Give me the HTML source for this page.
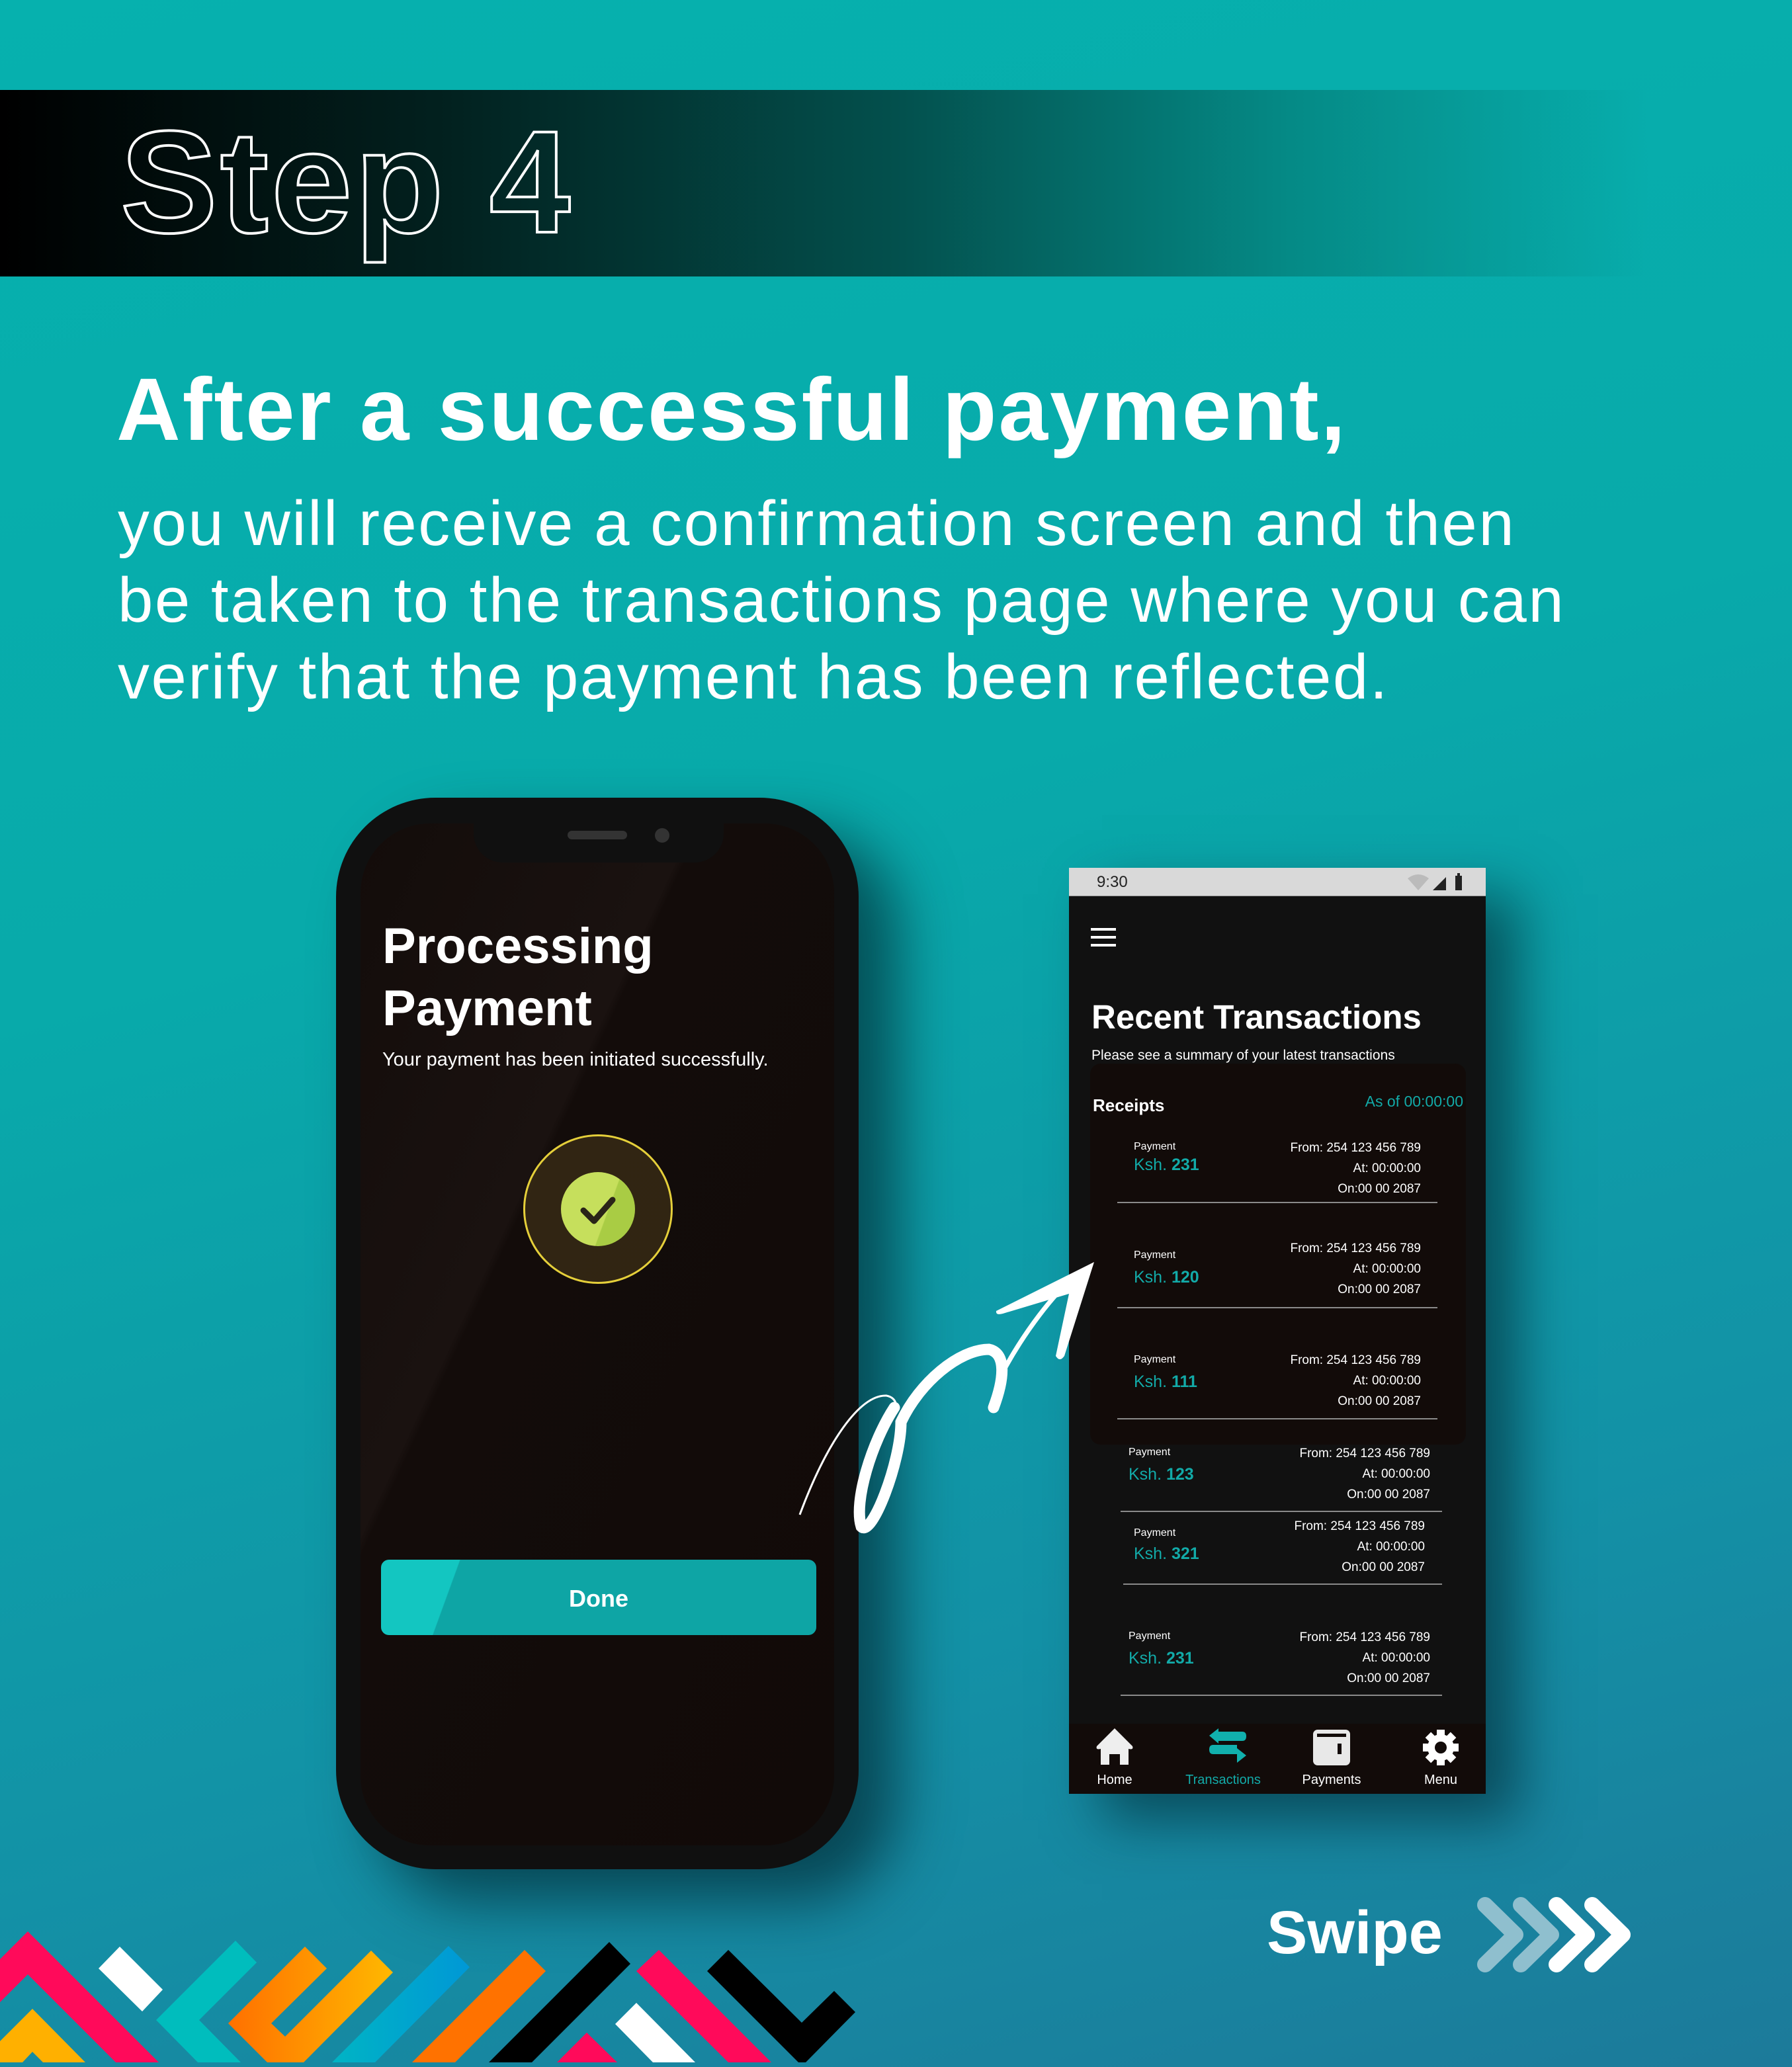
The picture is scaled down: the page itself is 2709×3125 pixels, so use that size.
<!DOCTYPE html>
<html><head><meta charset="utf-8">
<style>
*{margin:0;padding:0;box-sizing:border-box}
html,body{width:2709px;height:3125px;overflow:hidden}
body{position:relative;font-family:"Liberation Sans",sans-serif;background:linear-gradient(165deg,#06b1ae 0%,#08aaaa 40%,#1391a6 75%,#1c7a9a 100%);}
.a{position:absolute;white-space:nowrap;line-height:1}
.band{position:absolute;left:0;top:136px;width:2709px;height:282px;background:linear-gradient(90deg,#000 0%,#02211f 25%,#03504d 50%,#058a86 72%,rgba(6,170,168,0) 92%)}
.w{color:#fff}
.t{color:#12aaa8}
.phone{position:absolute;left:508px;top:1206px;width:790px;height:1620px;border-radius:150px;background:#101010;box-shadow:60px 50px 90px rgba(0,35,45,.65)}
.screen{position:absolute;left:37px;top:39px;width:716px;height:1545px;border-radius:105px;background:linear-gradient(115deg,#130c0a 0%,#1a1210 35%,#130c0a 36%,#110a08 100%);overflow:hidden}
.notch{position:absolute;left:208px;top:38px;width:378px;height:60px;background:#101010;border-radius:0 0 44px 44px}
.rp{position:absolute;left:1616px;top:1312px;width:630px;height:1400px;background:#111;box-shadow:50px 40px 80px rgba(0,35,45,.6);overflow:hidden}
.r{text-align:right}
.div{position:absolute;height:2px;background:#8a8a8a}
.p{font-size:96px;letter-spacing:2.5px}
</style></head><body>
<div class="band"></div>
<div class="a" style="left:182px;top:165px;font-size:220px;font-weight:bold;color:transparent;-webkit-text-stroke:4px #fff;letter-spacing:4px">Step 4</div>
<div class="a w" style="left:176px;top:553px;font-size:134px;font-weight:bold;letter-spacing:3px">After a successful payment,</div>
<div class="a w p" style="left:178px;top:744px">you will receive a confirmation screen and then</div>
<div class="a w p" style="left:178px;top:860px">be taken to the transactions page where you can</div>
<div class="a w p" style="left:178px;top:976px">verify that the payment has been reflected.</div>

<div class="phone">
 <div class="screen">
  <div class="a w" style="left:33px;top:148px;font-size:76px;font-weight:bold">Processing</div>
  <div class="a w" style="left:33px;top:242px;font-size:76px;font-weight:bold">Payment</div>
  <div class="a w" style="left:33px;top:343px;font-size:29px">Your payment has been initiated successfully.</div>
  <div style="position:absolute;left:246px;top:470px;width:226px;height:226px;border-radius:50%;border:3px solid #e5cf3a;background:rgba(70,55,25,.6)"></div>
  <div style="position:absolute;left:303px;top:527px;width:112px;height:112px;border-radius:50%;background:linear-gradient(110deg,#c6df5c 60%,#a9cc44 61%)"></div>
  <svg style="position:absolute;left:303px;top:527px" width="112" height="112"><path d="M34 58 L50 74 L78 42" fill="none" stroke="#2a2418" stroke-width="9" stroke-linecap="round" stroke-linejoin="round"/></svg>
  <div style="position:absolute;left:31px;top:1113px;width:658px;height:114px;border-radius:12px;background:linear-gradient(110deg,#13c6c1 17%,#0ea5a5 17.2%)"></div>
  <div class="a w" style="left:31px;top:1154px;width:658px;text-align:center;font-size:36px;font-weight:bold">Done</div>
 </div>
 <div class="notch"></div>
 <div style="position:absolute;left:350px;top:50px;width:90px;height:13px;border-radius:7px;background:#333"></div>
 <div style="position:absolute;left:482px;top:46px;width:22px;height:22px;border-radius:50%;background:#333"></div>
</div>

<div class="rp">
 <div style="position:absolute;left:0;top:0;width:630px;height:43px;background:#d9d9d9;border-bottom:1px solid #999"></div>
 <div class="a" style="left:42px;top:10px;font-size:24px;color:#222">9:30</div>
 <svg style="position:absolute;left:508px;top:6px" width="90" height="32"><path d="M4 10 Q20 -2 36 10 L20 28Z" fill="#bbb"/><path d="M42 28 L62 8 L62 28Z" fill="#222"/><rect x="76" y="6" width="10" height="22" fill="#222"/><rect x="79" y="2" width="4" height="4" fill="#222"/></svg>
 <div style="position:absolute;left:33px;top:91px;width:38px;height:4px;background:#fff"></div>
 <div style="position:absolute;left:33px;top:103px;width:38px;height:4px;background:#fff"></div>
 <div style="position:absolute;left:33px;top:115px;width:38px;height:4px;background:#fff"></div>
 <div class="a w" style="left:34px;top:200px;font-size:51px;font-weight:bold">Recent Transactions</div>
 <div class="a w" style="left:34px;top:273px;font-size:21px">Please see a summary of your latest transactions</div>
 <div style="position:absolute;left:32px;top:296px;width:568px;height:576px;border-radius:16px;background:#120b09"></div>
 <div class="a w" style="left:36px;top:346px;font-size:26px;font-weight:bold">Receipts</div>
 <div class="a t r" style="right:34px;top:342px;font-size:23px">As of 00:00:00</div>
 <div class="a w" style="left:98px;top:414px;font-size:16px">Payment</div>
 <div class="a t" style="left:98px;top:437px;font-size:25px">Ksh. <b>231</b></div>
 <div class="a w r" style="right:98px;top:408px;font-size:19px;line-height:31px">From: 254 123 456 789<br>At: 00:00:00<br>On:00 00 2087</div>
 <div class="div" style="left:73px;top:505px;width:484px"></div>

 <div class="a w" style="left:98px;top:578px;font-size:16px">Payment</div>
 <div class="a t" style="left:98px;top:607px;font-size:25px">Ksh. <b>120</b></div>
 <div class="a w r" style="right:98px;top:560px;font-size:19px;line-height:31px">From: 254 123 456 789<br>At: 00:00:00<br>On:00 00 2087</div>
 <div class="div" style="left:73px;top:664px;width:484px"></div>

 <div class="a w" style="left:98px;top:736px;font-size:16px">Payment</div>
 <div class="a t" style="left:98px;top:765px;font-size:25px">Ksh. <b>111</b></div>
 <div class="a w r" style="right:98px;top:729px;font-size:19px;line-height:31px">From: 254 123 456 789<br>At: 00:00:00<br>On:00 00 2087</div>
 <div class="div" style="left:73px;top:832px;width:484px"></div>

 <div class="a w" style="left:90px;top:876px;font-size:16px">Payment</div>
 <div class="a t" style="left:90px;top:905px;font-size:25px">Ksh. <b>123</b></div>
 <div class="a w r" style="right:84px;top:870px;font-size:19px;line-height:31px">From: 254 123 456 789<br>At: 00:00:00<br>On:00 00 2087</div>
 <div class="div" style="left:78px;top:972px;width:486px"></div>

 <div class="a w" style="left:98px;top:998px;font-size:16px">Payment</div>
 <div class="a t" style="left:98px;top:1025px;font-size:25px">Ksh. <b>321</b></div>
 <div class="a w r" style="right:92px;top:980px;font-size:19px;line-height:31px">From: 254 123 456 789<br>At: 00:00:00<br>On:00 00 2087</div>
 <div class="div" style="left:82px;top:1082px;width:482px"></div>

 <div class="a w" style="left:90px;top:1154px;font-size:16px">Payment</div>
 <div class="a t" style="left:90px;top:1183px;font-size:25px">Ksh. <b>231</b></div>
 <div class="a w r" style="right:84px;top:1148px;font-size:19px;line-height:31px">From: 254 123 456 789<br>At: 00:00:00<br>On:00 00 2087</div>
 <div class="div" style="left:78px;top:1250px;width:486px"></div>

 <div style="position:absolute;left:0;top:1294px;width:630px;height:106px;background:#120b09"></div>
 <svg style="position:absolute;left:0;top:1294px" width="630" height="106">
  <path d="M42 34 L69 7 L96 34 Q98 40 90 38 L90 62 L77 62 L77 46 L61 46 L61 62 L48 62 L48 38 Q40 40 42 34Z" fill="#eee"/>
  <path d="M212 18 L226 7 L226 12 L262 12 Q268 12 268 19 Q268 26 262 26 L226 26 L226 30 Z" fill="#11b0ad"/>
  <path d="M268 48 L254 37 L254 32 L218 32 Q212 32 212 39 Q212 46 218 46 L254 46 L254 59 Z" fill="#11b0ad"/>
  <rect x="369" y="9" width="56" height="54" rx="7" fill="#e8e8e8"/>
  <rect x="375" y="15" width="44" height="5" fill="#120b09"/>
  <rect x="406" y="30" width="6" height="16" fill="#120b09"/>
  <g transform="translate(562,36)"><circle r="20" fill="#fff"/><g fill="#fff"><rect x="-6" y="-27" width="12" height="12"/><rect x="-6" y="15" width="12" height="12"/><rect x="-27" y="-6" width="12" height="12"/><rect x="15" y="-6" width="12" height="12"/><g transform="rotate(45)"><rect x="-6" y="-27" width="12" height="12"/><rect x="-6" y="15" width="12" height="12"/><rect x="-27" y="-6" width="12" height="12"/><rect x="15" y="-6" width="12" height="12"/></g></g><circle r="9" fill="#120b09"/></g>
 </svg>
 <div class="a w" style="left:35px;top:1369px;font-size:20px;width:68px;text-align:center">Home</div>
 <div class="a t" style="left:168px;top:1369px;font-size:20px;width:130px;text-align:center">Transactions</div>
 <div class="a w" style="left:342px;top:1369px;font-size:20px;width:110px;text-align:center">Payments</div>
 <div class="a w" style="left:527px;top:1369px;font-size:20px;width:70px;text-align:center">Menu</div>
</div>

<svg style="position:absolute;left:0;top:0" width="2709" height="3125">
 <path d="M1209 2290 C1250 2180 1300 2108 1340 2110 C1350 2112 1354 2118 1355 2125" fill="none" stroke="#fff" stroke-width="3"/>
 <path d="M1352 2128 C1318 2180 1290 2270 1302 2308 C1318 2325 1362 2210 1362 2150 C1390 2090 1450 2040 1495 2040 C1522 2046 1518 2085 1502 2128" fill="none" stroke="#fff" stroke-width="17" stroke-linecap="round"/>
 <path d="M1514 2078 C1550 2010 1595 1955 1622 1932" fill="none" stroke="#fff" stroke-width="7" stroke-linecap="round"/>
 <path d="M1654 1908 L1506 1982 Q1505 1989 1516 1986 L1616 1956 L1596 2050 Q1602 2060 1609 2050 Z" fill="#fff"/>
 <defs>
  <linearGradient id="og" x1="0" x2="1"><stop offset="0" stop-color="#ff7000"/><stop offset="1" stop-color="#ffb800"/></linearGradient>
  <linearGradient id="bg" x1="0" x2="1"><stop offset="0" stop-color="#00b4c4"/><stop offset="1" stop-color="#0098d6"/></linearGradient>
 </defs>
 <polygon points="0,2962 42,2920 240,3118 175,3118 42,2985 0,3027" fill="#ff0a5a"/>
 <polygon points="181,2943 246,3008 215,3041 149,2976" fill="#fff"/>
 <polygon points="49,3037 129,3118 65,3118 49,3102 34,3118 0,3118 0,3086" fill="#ffb000"/>
 <polygon points="356,2934 388,2967 301,3054 364,3118 299,3118 236,3054" fill="#00bdbd"/>
 <polygon points="461,2943 494,2976 410,3059 431,3079 561,2949 594,2982 459,3118 404,3118 345,3059" fill="url(#og)"/>
 <polygon points="678,2942 710,2974 567,3118 502,3118" fill="url(#bg)"/>
 <polygon points="793,2948 825,2980 688,3118 623,3118" fill="#ff7200"/>
 <polygon points="921,2936 953,2969 804,3118 739,3118" fill="#000"/>
 <polygon points="887,3073 933,3118 842,3118" fill="#ff0a5a"/>
 <polygon points="962,3028 1051,3118 987,3118 930,3060" fill="#fff"/>
 <polygon points="996,2948 1166,3118 1101,3118 962,2980" fill="#ff0a5a"/>
 <polygon points="1101,2948 1212,3058 1261,3010 1293,3042 1218,3118 1207,3118 1069,2980" fill="#000"/>
 <g fill="none" stroke-width="24" stroke-linecap="round" stroke-linejoin="round">
  <polyline points="2245,2880 2291,2925 2245,2970" stroke="#8fbfce"/>
  <polyline points="2299,2880 2345,2925 2299,2970" stroke="#8fbfce"/>
  <polyline points="2353,2880 2399,2925 2353,2970" stroke="#fff"/>
  <polyline points="2407,2880 2453,2925 2407,2970" stroke="#fff"/>
 </g>
</svg>
<div class="a w" style="left:1915px;top:2876px;font-size:92px;font-weight:bold">Swipe</div>
</body></html>
